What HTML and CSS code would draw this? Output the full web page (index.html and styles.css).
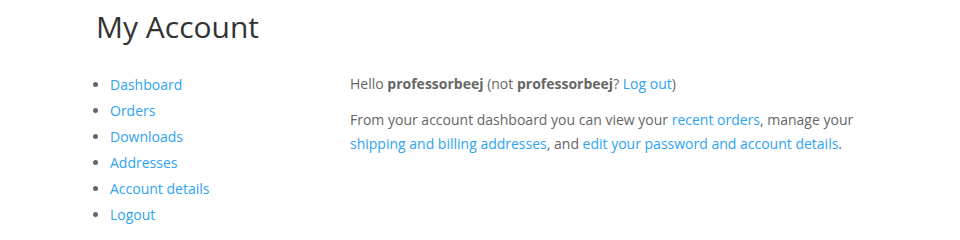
FILE: index.html
```html
<!DOCTYPE html>
<html lang="en">
<head>
<meta charset="utf-8">
<title>My Account</title>
<link rel="stylesheet" href="styles.css">
</head>
<body>
<div class="container">
  <h1 class="page-title">My Account</h1>
  <div class="account">
    <nav class="account-nav">
      <ul>
        <li><a href="#">Dashboard</a></li>
        <li><a href="#">Orders</a></li>
        <li><a href="#">Downloads</a></li>
        <li><a href="#">Addresses</a></li>
        <li><a href="#">Account details</a></li>
        <li><a href="#">Logout</a></li>
      </ul>
    </nav>
    <div class="account-content">
      <p>Hello <strong>professorbeej</strong> (not <strong>professorbeej</strong>? <a href="#">Log out</a>)</p>
      <p>From your account dashboard you can view your <a href="#">recent orders</a>, manage your <a href="#">shipping and billing addresses</a>, and <a href="#">edit your password and account details</a>.</p>
    </div>
  </div>
</div>
</body>
</html>
```

FILE: styles.css
```css
html, body {
  margin: 0;
  padding: 0;
  background: #ffffff;
}

body {
  font-family: "Open Sans", "Liberation Sans", Arial, sans-serif;
  font-size: 14px;
  color: #666666;
}

a {
  color: #2ea3f2;
  text-decoration: none;
}

.container {
  width: 768px;
  margin: 0 auto;
  padding-top: 9px;
}

.page-title {
  margin: 0 0 27px 0;
  font-size: 30px;
  line-height: 36px;
  font-weight: 400;
  color: #333333;
}

.account {
  display: grid;
  grid-template-columns: 254px 1fr;
}

.account-nav ul {
  margin: 0;
  padding: 0 0 0 14px;
  list-style-type: disc;
  line-height: 26px;
}

.account-content p {
  margin: 0 0 12px 0;
  line-height: 24px;
}

.account-content strong {
  font-weight: 700;
}
```
